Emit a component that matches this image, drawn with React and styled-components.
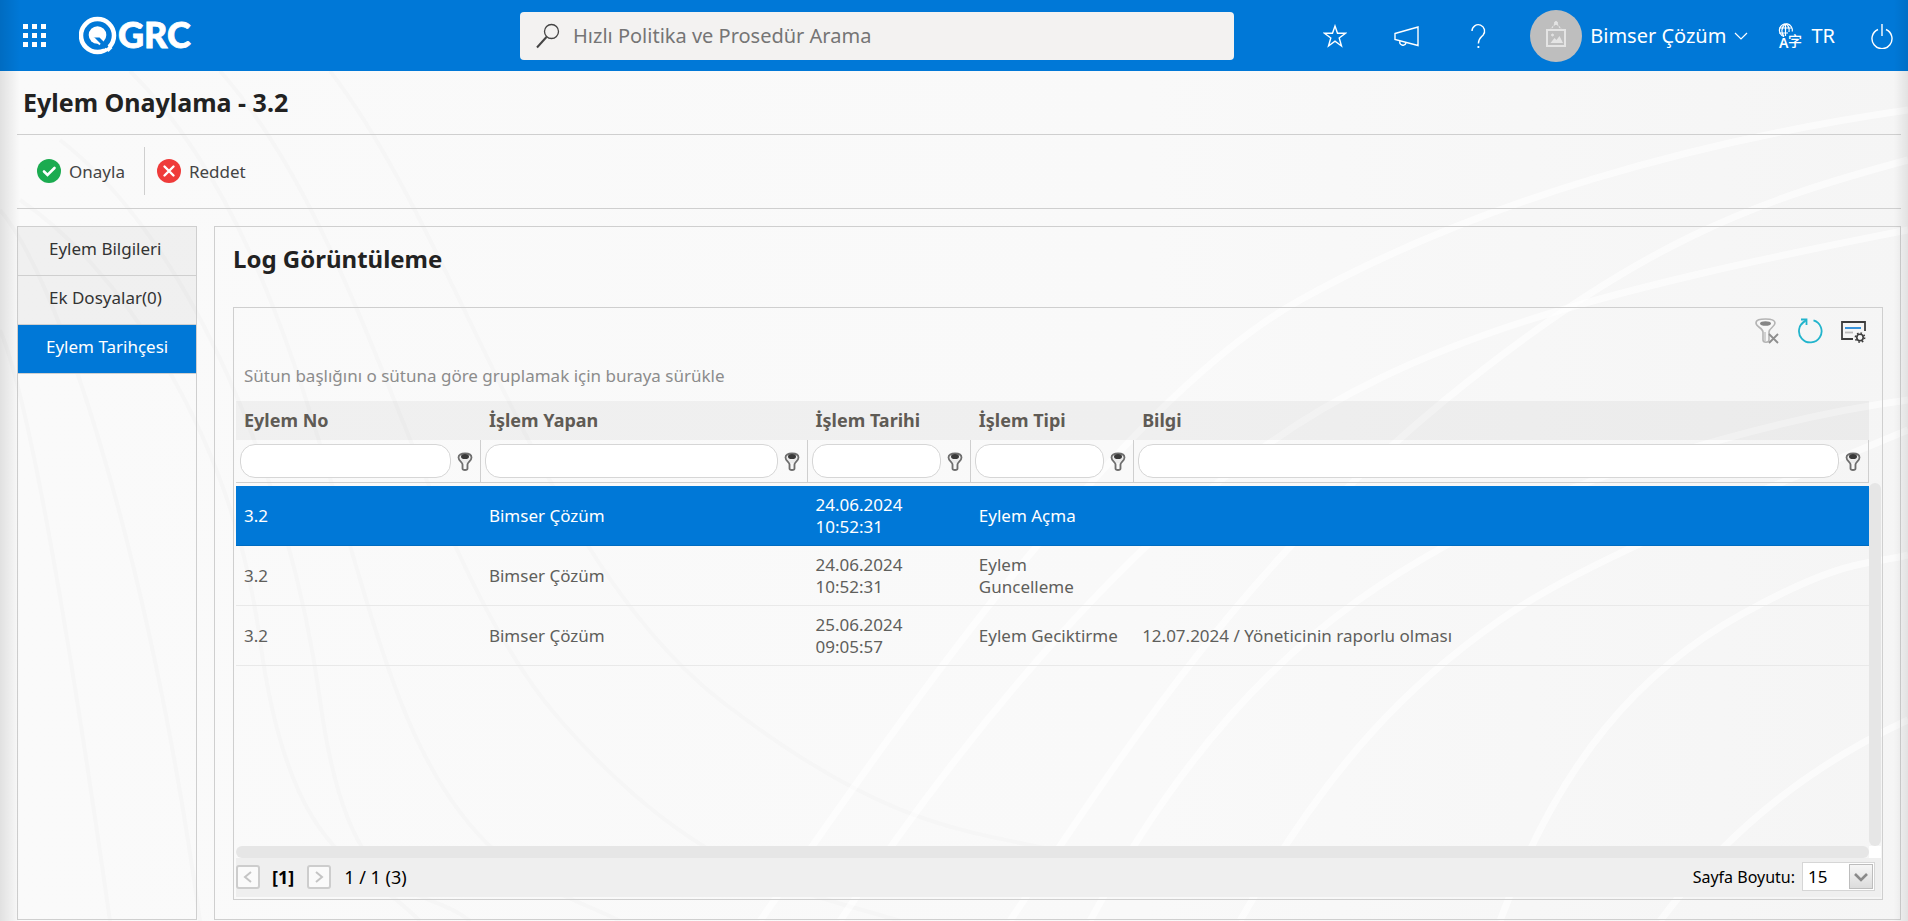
import { useState } from 'react';
import styled, { createGlobalStyle } from 'styled-components';

const GlobalStyle = createGlobalStyle`
  * {
    box-sizing: border-box;
  }

  body {
    margin: 0;
    background: #fafafa;
    color: #333;
    font-family: 'Noto Sans', 'Open Sans', sans-serif;
    font-size: 17px;
  }

  button, input, select {
    font-family: inherit;
    font-size: inherit;
    color: inherit;
  }
`;

const Page = styled.div`
  position: relative;
  z-index: 0;
  display: flex;
  flex-direction: column;
  min-height: 100vh;
`;

const Backdrop = styled.svg`
  position: absolute;
  inset: 0;
  width: 100%;
  height: 100%;
  z-index: -1;
`;

const EdgeShade = styled.div`
  position: absolute;
  inset: 0;
  pointer-events: none;
  background:
    linear-gradient(to right, rgba(0, 0, 0, 0.1), rgba(0, 0, 0, 0) 20px),
    linear-gradient(to left, rgba(0, 0, 0, 0.08), rgba(0, 0, 0, 0) 14px);
`;

/* Top bar */

const TopBar = styled.header`
  display: grid;
  grid-template-columns: minmax(200px, 500px) minmax(200px, 714px) minmax(max-content, 1fr);
  align-items: center;
  height: 71px;
  padding: 0 11px 0 20px;
  background: #0078d7;
  color: #fff;
`;

const Brand = styled.div`
  display: flex;
  align-items: center;
  gap: 29px;
`;

const IconButton = styled.button`
  display: flex;
  align-items: center;
  justify-content: center;
  padding: 3px;
  border: 0;
  background: none;
  cursor: pointer;

  svg {
    display: block;
  }
`;

const LogoLink = styled.a`
  display: flex;
  color: #fff;
`;

const SearchForm = styled.form`
  display: flex;
  align-items: center;
  gap: 13px;
  height: 48px;
  padding: 0 16px;
  border-radius: 4px;
  background: #f3f2f1;
`;

const SearchInput = styled.input`
  flex: 1;
  min-width: 0;
  padding: 0;
  border: 0;
  outline: 0;
  background: none;
  color: #333;
  font-size: 20px;

  &::placeholder {
    color: #757575;
    opacity: 1;
  }
`;

const Actions = styled.div`
  display: flex;
  align-items: center;
  justify-content: flex-end;
`;

const QuickLinks = styled.div`
  display: flex;
  align-items: center;
  gap: 41px;
  margin-right: 36px;
`;

const UserButton = styled.button`
  display: flex;
  align-items: center;
  gap: 8px;
  padding: 0;
  border: 0;
  background: none;
  color: #fff;
  font-size: 20px;
  white-space: nowrap;
  cursor: pointer;
`;

const Avatar = styled.span`
  display: flex;
  align-items: center;
  justify-content: center;
  width: 52px;
  height: 52px;
  border-radius: 50%;
  background: #bebebe;
`;

const LangButton = styled(UserButton)`
  margin: 0 32px 0 29px;
`;

/* Content */

const Content = styled.main`
  flex: 1;
  display: flex;
  flex-direction: column;
  padding: 0 7px 1px 17px;
`;

const PageTitle = styled.h1`
  margin: 0;
  padding: 15px 6px;
  border-bottom: 1px solid #cfcfcf;
  color: #222;
  font-size: 25px;
  line-height: 33px;
`;

const ActionBar = styled.div`
  display: flex;
  height: 74px;
  padding: 12px 8px 13px;
  border-bottom: 1px solid #cfcfcf;
`;

const ActionButton = styled.button`
  display: flex;
  align-items: center;
  gap: 8px;
  padding: 0 19px 0 12px;
  border: 0;
  background: none;
  color: #444;
  cursor: pointer;

  & + & {
    border-left: 1px solid #cfcfcf;
  }
`;

const Columns = styled.div`
  flex: 1;
  display: grid;
  grid-template-columns: 180px minmax(0, 1fr);
  gap: 17px;
  margin-top: 17px;
`;

const Sidebar = styled.nav`
  border: 1px solid #cfcfcf;
`;

const SideLink = styled.a`
  display: block;
  height: 49px;
  padding: 10px 0 10px ${props => (props.$active ? '28px' : '31px')};
  border-bottom: 1px solid #cfcfcf;
  background: ${props => (props.$active ? '#0078d7' : 'rgba(0, 0, 0, 0.04)')};
  color: ${props => (props.$active ? '#fff' : '#333')};
  line-height: 24px;
  text-decoration: none;
  white-space: nowrap;
`;

const Panel = styled.section`
  display: flex;
  flex-direction: column;
  padding: 15px 17px 19px 18px;
  border: 1px solid #cfcfcf;
`;

const PanelTitle = styled.h2`
  margin: 0 0 32px;
  color: #222;
  font-size: 24px;
  line-height: 33px;
`;

const GridBox = styled.div`
  flex: 1;
  display: flex;
  flex-direction: column;
  padding: 0 1px 2px 2px;
  border: 1px solid #cfcfcf;
`;

const GridTools = styled.div`
  display: flex;
  justify-content: flex-end;
  gap: 11px;
  padding: 7px 12px 0 0;
`;

const GroupHint = styled.div`
  padding: 17px 8px 13px;
  color: #8c8c8c;
  line-height: 24px;
`;

const GridArea = styled.div`
  flex: 1;
  display: grid;
  grid-template-columns: minmax(0, 1fr) 12px;
  grid-template-rows: 1fr 12px;
`;

const VerticalTrack = styled.div`
  margin-top: 82px;
  border-radius: 6px;
  background: #e6e6e6;
`;

const HorizontalTrack = styled.div`
  border-radius: 6px;
  background: #e6e6e6;
`;

const TrackCorner = styled.div`
  background: #fff;
`;

const Table = styled.table`
  align-self: start;
  width: 100%;
  border-spacing: 0;
  table-layout: fixed;

  thead::after {
    content: '';
    display: block;
    height: 3px;
  }
`;

const Col = styled.col`
  width: ${props => props.$width};
`;

const HeadCell = styled.th`
  height: 39px;
  padding: 0 8px 2px;
  background: rgba(0, 0, 0, 0.04);
  color: #5f5b55;
  font-size: 18px;
  line-height: 24px;
  text-align: left;
`;

const FilterCell = styled.td`
  height: 43px;
  padding: 0 4px;
  border-right: 1px solid #cfcfcf;
  border-bottom: 1px solid #cfcfcf;
`;

const FilterField = styled.div`
  display: flex;
  align-items: center;
  gap: 3px;
`;

const FilterInput = styled.input`
  flex: 1;
  min-width: 0;
  height: 34px;
  padding: 0 12px;
  border: 1px solid #d6d6d6;
  border-radius: 15px;
  background: #fff;
`;

const Row = styled.tr`
  background: ${props => (props.$selected ? '#0078d7' : 'none')};
  color: ${props => (props.$selected ? '#fff' : '#5f5f5c')};
  cursor: pointer;

  td {
    height: 60px;
    padding: 0 8px;
    border-bottom: 1px solid ${props => (props.$selected ? '#006cc1' : '#e9e9e9')};
    line-height: 22px;
  }
`;

const Pager = styled.div`
  display: flex;
  align-items: center;
  height: 39px;
  padding: 0 6px 2px 0;
  background: #efefef;
  color: #000;
  font-size: 18px;
`;

const PageButton = styled.button`
  display: flex;
  align-items: center;
  justify-content: center;
  width: 24px;
  height: 24px;
  padding: 0;
  border: 2px solid #cdcdcd;
  border-radius: 3px;
  background: #fafafa;
`;

const CurrentPage = styled.strong`
  margin: 0 13px 0 12px;
`;

const PageSummary = styled.span`
  flex: 1;
  margin-left: 13px;
`;

const SizeLabel = styled.label`
  margin-right: 7px;
  font-size: 16px;
`;

const SizeBox = styled.div`
  position: relative;
  width: 73px;
  height: 29px;
`;

const SizeSelect = styled.select`
  width: 100%;
  height: 100%;
  padding: 0 5px;
  border: 1px solid #d6d6d6;
  background: #fff;
  color: #000;
  font-size: 17px;
  appearance: none;
`;

const SizeArrow = styled.span`
  position: absolute;
  top: 2px;
  right: 2px;
  display: flex;
  align-items: center;
  justify-content: center;
  width: 24px;
  height: 25px;
  border: 1px solid #bdbdbd;
  background: linear-gradient(#f6f6f6, #dcdcdc);
  pointer-events: none;
`;

/* Icons */

const AppsIcon = () => (
  <svg width="24" height="24" viewBox="0 0 24 24" fill="#fff">
    {[0, 9, 18].map(y => [0, 9, 18].map(x => (
      <rect key={`${x}-${y}`} x={x} y={y} width="5" height="5" />
    )))}
  </svg>
);

const Logo = () => (
  <svg width="124" height="48" viewBox="0 -4 124 48">
    <circle cx="18.500" cy="19.500" r="16.500" fill="none" stroke="#fff" strokeWidth="4.500" />
    <circle cx="18.500" cy="19" r="8.800" fill="#fff" />
    <path d="M14 21.500h6.500L29 30l-4 3-6-6z" fill="#0078d7" />
    <path d="M14 21.500l7 7" stroke="#fff" strokeWidth="2" />
    <path d="M22 25.500L33.500 36" stroke="#0078d7" strokeWidth="2.500" />
    <path d="M27 33l3.500-3.500 3 2.500-4 4z" fill="#fff" />
    <text x="39" y="32" fill="#fff" stroke="#fff" strokeWidth="0.800" fontFamily="Lato" fontWeight="900" fontSize="36">GRC</text>
  </svg>
);

const SearchIcon = () => (
  <svg width="24" height="26" viewBox="0 0 24 26" fill="none" stroke="#444">
    <circle cx="15.500" cy="8.500" r="7" strokeWidth="1.300" />
    <path d="M10.500 14L1 24.500" strokeWidth="2" />
  </svg>
);

const StarIcon = () => (
  <svg width="24" height="24" viewBox="0 0 24 24" fill="none" stroke="#fff" strokeWidth="1.400">
    <path d="M12 2l2.500 7.200h8l-6.300 4.700 2.300 8.100-6.500-4.900L5.500 22l2.300-8.100L1.500 9.200h8z" />
  </svg>
);

const MegaphoneIcon = () => (
  <svg width="26" height="24" viewBox="0 0 26 24" fill="none" stroke="#fff" strokeWidth="1.400">
    <path d="M1 9.500L24 3v18.500L1 15.500z" />
    <path d="M6 17a3 3 0 0 0 6 2" />
  </svg>
);

const HelpIcon = () => (
  <svg width="24" height="26" viewBox="0 0 24 26" fill="none" stroke="#fff" strokeWidth="1.400">
    <path d="M5 8a6.300 6.300 0 1 1 11 4.200c-2.500 2.600-4.600 3.800-4.600 8.300" />
    <path d="M11.400 23v2" strokeWidth="1.800" />
  </svg>
);

const PictureIcon = () => (
  <svg width="22" height="32" viewBox="0 0 22 32" fill="none" stroke="#e4e4e4">
    <circle cx="11" cy="3" r="1.500" fill="#e4e4e4" />
    <path d="M10 4L6 9M12 4l4 5" strokeWidth="1.200" strokeDasharray="2 1" />
    <rect x="2" y="10" width="18" height="16" strokeWidth="2" />
    <circle cx="7.500" cy="15" r="1" fill="#e4e4e4" />
    <path d="M5.500 23l4-5 2 2 3-4 3.500 7z" fill="#e4e4e4" stroke="none" />
  </svg>
);

const ChevronDown = ({ size = 14, color = '#fff', weight = 1.2 }) => (
  <svg width={size} height={size} viewBox="0 0 14 14" fill="none" stroke={color} strokeWidth={weight}>
    <path d="M1 4l6 6 6-6" />
  </svg>
);

const PagerArrow = ({ flip }) => (
  <svg width="12" height="14" viewBox="0 0 12 14" fill="none" stroke="#c4c4c4" strokeWidth="2">
    <path d={flip ? 'M3 2l6 5-6 5' : 'M9 2L3 7l6 5'} />
  </svg>
);

const LanguageIcon = () => (
  <svg width="26" height="34" viewBox="0 -4 26 34" fill="none" stroke="#fff" strokeWidth="1.200">
    <path d="M7 13.500a6.500 6.500 0 1 1 8.300-5" />
    <path d="M8 1C4 5 4 10 7 13.500M9 1c3 2 3.500 5 3 8M2 5h13M2 10h9M8.500 1v12" />
    <text x="2" y="25" fill="#fff" stroke="none" fontFamily="Noto Sans" fontWeight="600" fontSize="14">A</text>
    <text x="11" y="23" fill="#fff" stroke="none" fontFamily="Noto Sans CJK SC" fontWeight="500" fontSize="14">字</text>
  </svg>
);

const PowerIcon = () => (
  <svg width="24" height="26" viewBox="0 0 24 26" fill="none" stroke="#fff" strokeWidth="1.400">
    <path d="M8 6.500a10 10 0 1 0 8 0M12 1v12" />
  </svg>
);

const ApproveIcon = () => (
  <svg width="24" height="24" viewBox="0 0 24 24">
    <circle cx="12" cy="12" r="12" fill="#1bab50" />
    <path d="M7 12.500l3.500 3.500 7-7" fill="none" stroke="#fff" strokeWidth="2.600" strokeLinecap="round" />
  </svg>
);

const RejectIcon = () => (
  <svg width="24" height="24" viewBox="0 0 24 24">
    <circle cx="12" cy="12" r="12" fill="#ef3b3a" />
    <path d="M7.500 7.500l9 9M16.500 7.500l-9 9" stroke="#fff" strokeWidth="2.400" strokeLinecap="round" />
  </svg>
);

const FunnelIcon = () => (
  <svg width="16" height="19" viewBox="0 0 16 19">
    <path
      d="M1.500 5.500c0-2.500 2.500-4 6.500-4s6.500 1.500 6.500 4c0 3.500-4 4.500-4 7v4c0 2-5 2-5 0v-4c0-2.500-4-3.500-4-7z"
      fill="#ececec"
      stroke="#6e6e6e"
      strokeWidth="1.800"
    />
    <ellipse cx="8" cy="4.500" rx="4" ry="2.600" fill="#3a3a3a" />
    <path d="M8 11v6" stroke="#fff" strokeWidth="1.200" />
  </svg>
);

const ClearFilterIcon = () => (
  <svg width="26" height="26" viewBox="0 0 26 26" fill="none">
    <path d="M2 5c0-3 4-4 9.500-4S21 2 21 5c0 4-6 5-6 9v8c0 3-6 3-6 0v-8C9 10 2 9 2 5z" fill="#f7f7f7" stroke="#b4b4b4" strokeWidth="1.600" />
    <ellipse cx="11.500" cy="5.500" rx="5.500" ry="2.300" fill="#858585" />
    <path d="M11 14v9" stroke="#c4c4c4" strokeWidth="1.500" />
    <path d="M15 16l9 9M24 16l-9 9" stroke="#8e8e8e" strokeWidth="1.800" />
  </svg>
);

const RefreshIcon = () => (
  <svg width="26" height="26" viewBox="0 0 26 26" fill="none" stroke="#22b4cc" strokeWidth="1.800">
    <path d="M16.500 2.300A11.300 11.300 0 1 1 8.500 2.900" />
    <path d="M4 1.500h5.500V7" />
    <path d="M9 2L4.500 6.500" strokeWidth="1.200" />
  </svg>
);

const SettingsIcon = () => (
  <svg width="26" height="26" viewBox="0 0 26 26" fill="none">
    <path d="M25 13V4H2v17h11" stroke="#3d3d3d" strokeWidth="1.800" />
    <path d="M5 10h16" stroke="#2388d9" strokeWidth="1.800" />
    <path d="M5 14.500h8" stroke="#bbb" strokeWidth="1.800" />
    <circle cx="20" cy="19.500" r="3.200" stroke="#3d3d3d" strokeWidth="1.600" />
    <circle cx="20" cy="19.500" r="4.600" stroke="#3d3d3d" strokeWidth="1.600" strokeDasharray="1.600 2" />
  </svg>
);

// Faint arcs behind the whole page: grey ones on the left, white ones on the right
const greyArcs = [
  'M0 210C60 280 150 560 200 921',
  'M0 330C30 400 70 640 110 921',
  'M20 200C110 260 230 420 260 640S360 860 420 921',
  'M60 140C190 240 290 480 320 700S420 880 470 921',
  'M130 71C290 230 330 520 400 700S560 890 620 921',
  'M220 71C370 240 420 560 560 720S800 890 900 921',
  'M330 71C460 240 540 560 720 700S980 830 1100 860',
];

const whiteArcs = [
  'M1010 921C1130 740 1250 560 1445 400S1760 200 1908 160',
  'M1090 921C1210 700 1330 610 1445 546S1760 420 1908 400',
  'M1240 921C1330 760 1414 680 1500 620S1740 500 1908 430',
  'M1500 921C1560 760 1640 670 1744 613S1870 565 1908 555',
  'M840 921C960 740 1110 560 1260 450S1600 290 1908 230',
  'M760 921C900 720 1120 400 1300 300S1700 140 1908 110',
  'M1660 921C1720 840 1800 770 1908 720',
];

const PageBackdrop = () => (
  <Backdrop viewBox="0 0 1908 921" preserveAspectRatio="none" aria-hidden="true">
    <defs>
      <linearGradient id="page-tone" x1="0" y1="0" x2="1" y2="0">
        <stop offset="0" stopColor="#fafafa" />
        <stop offset="0.6" stopColor="#f9f9f9" />
        <stop offset="1" stopColor="#f5f5f5" />
      </linearGradient>
    </defs>
    <rect width="1908" height="921" fill="url(#page-tone)" />
    {greyArcs.map(d => (
      <path key={d} d={d} fill="none" stroke="#f6f6f6" strokeWidth="4" />
    ))}
    {whiteArcs.map(d => (
      <path key={d} d={d} fill="none" stroke="#fff" strokeOpacity="0.6" strokeWidth="7" />
    ))}
  </Backdrop>
);

const tabs = ['Eylem Bilgileri', 'Ek Dosyalar(0)', 'Eylem Tarihçesi'];

const columns = [
  { key: 'no', label: 'Eylem No', width: '15%' },
  { key: 'user', label: 'İşlem Yapan', width: '20%' },
  { key: 'date', label: 'İşlem Tarihi', width: '10%' },
  { key: 'type', label: 'İşlem Tipi', width: '10%' },
  { key: 'info', label: 'Bilgi', width: '45%' },
];

const logs = [
  { no: '3.2', user: 'Bimser Çözüm', date: '24.06.2024 10:52:31', type: 'Eylem Açma', info: '' },
  { no: '3.2', user: 'Bimser Çözüm', date: '24.06.2024 10:52:31', type: 'Eylem Guncelleme', info: '' },
  { no: '3.2', user: 'Bimser Çözüm', date: '25.06.2024 09:05:57', type: 'Eylem Geciktirme', info: '12.07.2024 / Yöneticinin raporlu olması' },
];

const LogTable = () => {
  const [selected, setSelected] = useState(0);

  return (
    <Table>
      <colgroup>
        {columns.map(col => <Col key={col.key} $width={col.width} />)}
      </colgroup>
      <thead>
        <tr>
          {columns.map(col => <HeadCell key={col.key} scope="col">{col.label}</HeadCell>)}
        </tr>
        <tr>
          {columns.map(col => (
            <FilterCell key={col.key}>
              <FilterField>
                <FilterInput type="text" aria-label={col.label} />
                <IconButton type="button" aria-label={`${col.label} filtre`}>
                  <FunnelIcon />
                </IconButton>
              </FilterField>
            </FilterCell>
          ))}
        </tr>
      </thead>
      <tbody>
        {logs.map((log, i) => (
          <Row key={i} $selected={i === selected} onClick={() => setSelected(i)}>
            {columns.map(col => <td key={col.key}>{log[col.key]}</td>)}
          </Row>
        ))}
      </tbody>
    </Table>
  );
};

const App = () => {
  const [activeTab, setActiveTab] = useState(2);

  return (
    <Page>
      <GlobalStyle />
      <PageBackdrop />

      <TopBar>
        <Brand>
          <IconButton aria-label="Menü"><AppsIcon /></IconButton>
          <LogoLink href="#" aria-label="QGRC"><Logo /></LogoLink>
        </Brand>
        <SearchForm role="search" onSubmit={e => e.preventDefault()}>
          <SearchIcon />
          <SearchInput
            type="text"
            placeholder="Hızlı Politika ve Prosedür Arama"
            aria-label="Hızlı Politika ve Prosedür Arama"
          />
        </SearchForm>
        <Actions>
          <QuickLinks>
            <IconButton aria-label="Favoriler"><StarIcon /></IconButton>
            <IconButton aria-label="Duyurular"><MegaphoneIcon /></IconButton>
            <IconButton aria-label="Yardım"><HelpIcon /></IconButton>
          </QuickLinks>
          <UserButton>
            <Avatar><PictureIcon /></Avatar>
            Bimser Çözüm
            <ChevronDown />
          </UserButton>
          <LangButton>
            <LanguageIcon />
            TR
          </LangButton>
          <IconButton aria-label="Çıkış"><PowerIcon /></IconButton>
        </Actions>
      </TopBar>

      <Content>
        <PageTitle>Eylem Onaylama - 3.2</PageTitle>
        <ActionBar>
          <ActionButton><ApproveIcon />Onayla</ActionButton>
          <ActionButton><RejectIcon />Reddet</ActionButton>
        </ActionBar>

        <Columns>
          <Sidebar>
            {tabs.map((tab, i) => (
              <SideLink key={tab} href="#" $active={i === activeTab} onClick={() => setActiveTab(i)}>
                {tab}
              </SideLink>
            ))}
          </Sidebar>

          <Panel>
            <PanelTitle>Log Görüntüleme</PanelTitle>
            <GridBox>
              <GridTools>
                <IconButton aria-label="Filtreyi temizle"><ClearFilterIcon /></IconButton>
                <IconButton aria-label="Yenile"><RefreshIcon /></IconButton>
                <IconButton aria-label="Ayarlar"><SettingsIcon /></IconButton>
              </GridTools>
              <GroupHint>Sütun başlığını o sütuna göre gruplamak için buraya sürükle</GroupHint>
              <GridArea>
                <LogTable />
                <VerticalTrack />
                <HorizontalTrack />
                <TrackCorner />
              </GridArea>
              <Pager>
                <PageButton aria-label="Önceki"><PagerArrow /></PageButton>
                <CurrentPage>[1]</CurrentPage>
                <PageButton aria-label="Sonraki"><PagerArrow flip /></PageButton>
                <PageSummary>1 / 1 (3)</PageSummary>
                <SizeLabel htmlFor="page-size">Sayfa Boyutu:</SizeLabel>
                <SizeBox>
                  <SizeSelect id="page-size" defaultValue="15">
                    <option>15</option>
                    <option>30</option>
                    <option>50</option>
                  </SizeSelect>
                  <SizeArrow><ChevronDown color="#8a8a8a" weight={2.6} /></SizeArrow>
                </SizeBox>
              </Pager>
            </GridBox>
          </Panel>
        </Columns>
      </Content>
      <EdgeShade />
    </Page>
  );
};

export default App;
